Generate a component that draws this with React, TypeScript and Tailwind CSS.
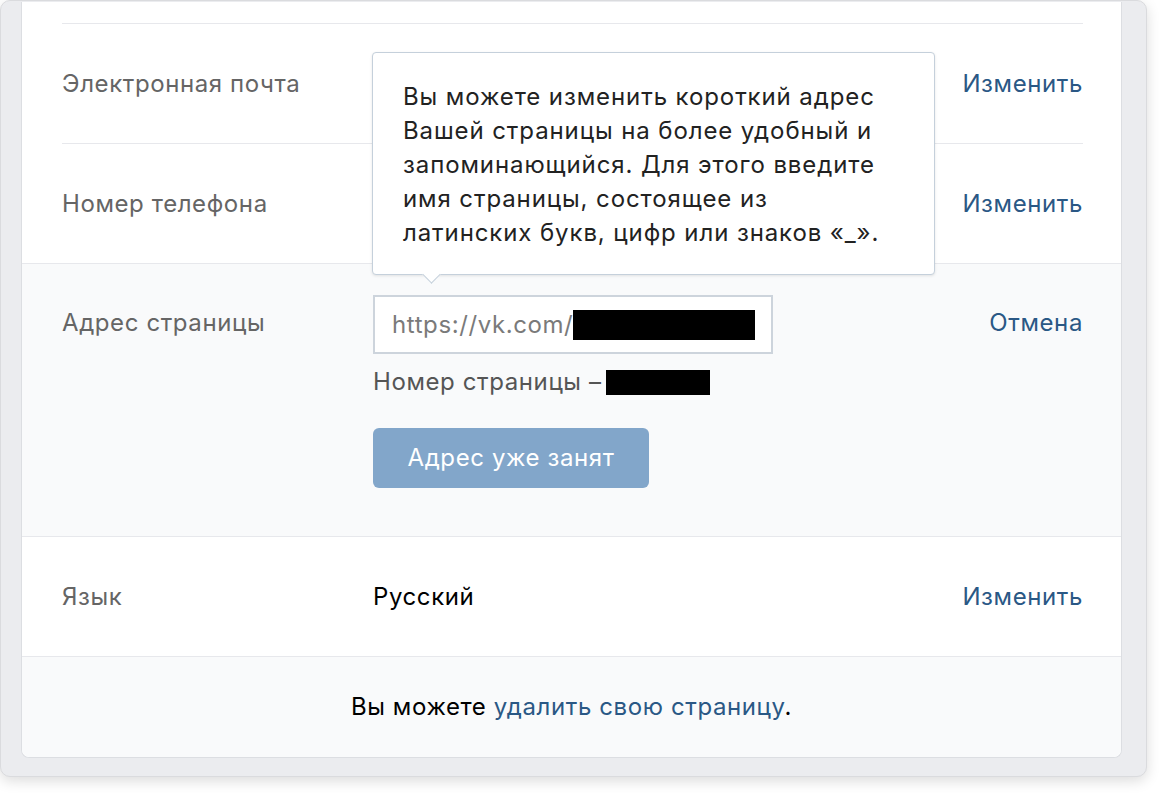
import React from 'react';

const font = { fontFamily: 'Inter, "Liberation Sans", Arial, sans-serif' };

type RowProps = {
  label: string;
  value?: React.ReactNode;
  action: string;
  inset?: boolean;
};

function Row({ label, value, action, inset }: RowProps) {
  return (
    <div className="pl-[40px] pr-[38px]">
      <div
        className={`flex items-center h-[120px] ${
          inset ? 'border-t border-[#e7e8ec]' : ''
        }`}
      >
        <div className="w-[311px] text-[#656565]">{label}</div>
        <div className="flex-1 text-black">{value}</div>
        <a className="text-[#2a5885]">{action}</a>
      </div>
    </div>
  );
}

export default function App() {
  return (
    <div
      className="w-[1166px] h-[797px] bg-white text-[24px] leading-[34px] tracking-[0.6px]"
      style={font}
    >
      <div className="w-[1147px] h-[777px] bg-[#ebecef] border border-[#dadbde] rounded-[10px] shadow-[0_4px_14px_rgba(0,0,0,0.14)] pl-[20px] pr-[24px] pt-[1px] pb-[18px]">
        <div className="relative h-full bg-white border-x border-b border-[#dcdee2] rounded-b-[8px] flex flex-col">
          {/* top rows */}
          <div className="h-[21px]" />
          <Row label="Электронная почта" action="Изменить" inset />
          <Row label="Номер телефона" action="Изменить" inset />

          {/* address section */}
          <div className="bg-[#f9fafb] border-t border-[#e7e8ec] pl-[40px] pr-[38px] pt-[31px] pb-[48px] flex">
            <div className="w-[311px] text-[#656565] pt-[11px]">
              Адрес страницы
            </div>
            <div className="flex-1">
              <div className="w-[400px] h-[59px] bg-white border-2 border-[#cdd4dc] flex items-center pl-[17px]">
                <span className="text-[#7a7a7a]">https://vk.com/</span>
                <span className="w-[182px] h-[30px] bg-black" />
              </div>
              <div className="flex items-center mt-[11px] text-[#555]">
                <span>Номер страницы –</span>
                <span className="ml-[4px] w-[104px] h-[25px] bg-black" />
              </div>
              <button className="mt-[29px] w-[276px] h-[60px] rounded-[6px] bg-[#82a6ca] text-white">
                Адрес уже занят
              </button>
            </div>
            <div className="pt-[11px]">
              <a className="text-[#2a5885]">Отмена</a>
            </div>
          </div>

          {/* language */}
          <div className="border-t border-[#e7e8ec] pl-[40px] pr-[38px]">
            <div className="flex items-center h-[119px]">
              <div className="w-[311px] text-[#656565]">Язык</div>
              <div className="flex-1 text-black">Русский</div>
              <a className="text-[#2a5885]">Изменить</a>
            </div>
          </div>

          {/* footer */}
          <div className="flex-1 bg-[#f9fafb] border-t border-[#e7e8ec] rounded-b-[8px] flex items-center justify-center">
            <p className="text-black">
              Вы можете{' '}
              <a className="text-[#2a5885]">удалить свою страницу</a>.
            </p>
          </div>

          {/* tooltip */}
          <div className="absolute left-[350px] top-[50px] w-[563px] h-[223px] bg-white border border-[#c5d0db] rounded-[4px] shadow-[0_1px_3px_rgba(0,0,0,0.1)] pl-[30px] pt-[27px] text-[#222] tracking-[0.9px]">
            <p>
              Вы можете изменить короткий адрес
              <br />
              Вашей страницы на более удобный и
              <br />
              запоминающийся. Для этого введите
              <br />
              имя страницы, состоящее из
              <br />
              латинских букв, цифр или знаков «_».
            </p>
            <div className="absolute left-[52px] -bottom-[7px] w-[13px] h-[13px] bg-white border-r border-b border-[#c5d0db] rotate-45" />
          </div>
        </div>
      </div>
    </div>
  );
}
